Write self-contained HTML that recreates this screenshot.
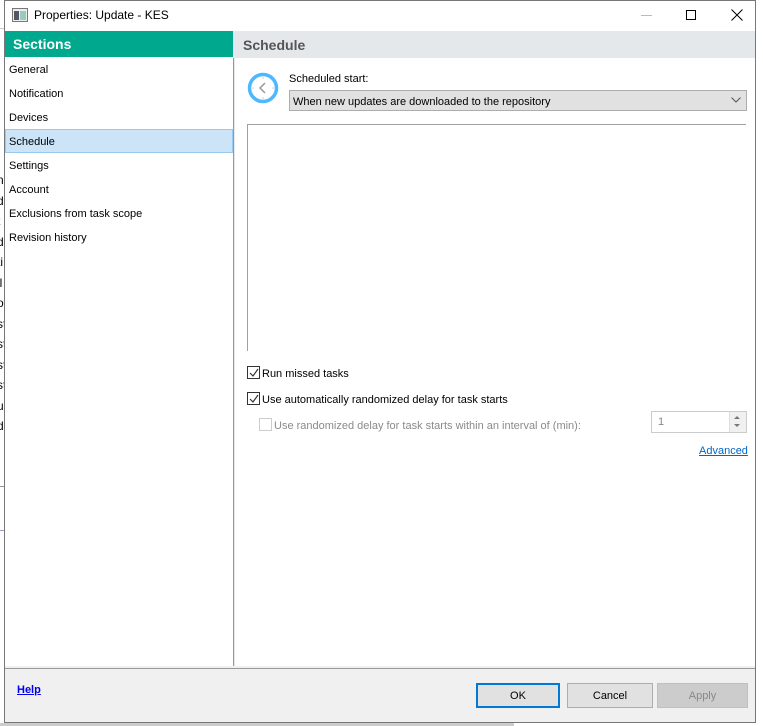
<!DOCTYPE html>
<html><head><meta charset="utf-8"><style>
*{margin:0;padding:0;box-sizing:border-box}
body{width:763px;height:726px;position:relative;overflow:hidden;background:#fff;font-family:"Liberation Sans",sans-serif;font-size:11px;color:#000}
.a{position:absolute}
.strip{left:0;width:4px;overflow:hidden;font-size:12px;line-height:20px;white-space:nowrap}
.nav div{position:absolute;left:9px;font-size:11px}
.btn{position:absolute;top:683px;height:25px;border:1px solid #adadad;background:#e1e1e1;text-align:center;line-height:25px;font-size:11px}
.cb{position:absolute;width:13px;height:13px;border:1px solid #333;background:#fff}
</style></head><body>
<div class="a" style="left:0;top:0;width:4px;height:726px;background:#fff"></div>
<div class="a" style="left:0;top:28px;width:4px;height:1px;background:#ccc"></div>
<div class="a strip" style="top:170px;left:-3px;width:7px;color:#000;line-height:20.5px">n<br>d<br>t<br>d<br>ti<br>il<br>o<br>st<br>st<br>st<br>st<br>u<br>d</div>
<div class="a" style="left:0;top:486px;width:4px;height:1px;background:#999"></div>
<div class="a" style="left:0;top:530px;width:4px;height:1px;background:#99c"></div>
<div class="a" style="left:0;top:723px;width:514px;height:3px;background:#ccc"></div>
<div class="a" style="left:4px;top:0;width:752px;height:723px;border:1px solid #777;background:#fff"></div>
<svg class="a" style="left:12px;top:8px" width="16" height="14"><rect x="0.5" y="0.5" width="15" height="13" fill="#eee" stroke="#777"/><rect x="2" y="3" width="5" height="9" fill="#556"/><rect x="8" y="3" width="6" height="9" fill="#9cb"/></svg>
<div class="a" style="left:34px;top:8px;font-size:12px">Properties: Update - KES</div>
<div class="a" style="left:641px;top:15px;width:11px;height:1px;background:#bbb"></div>
<div class="a" style="left:686px;top:10px;width:10px;height:10px;border:1px solid #000"></div>
<svg class="a" style="left:731px;top:9px" width="12" height="12"><path d="M0.5 0.5L11.5 11.5M11.5 0.5L0.5 11.5" stroke="#000"/></svg>
<div class="a" style="left:5px;top:31px;width:228px;height:26px;background:#00a88e;color:#fff;font-weight:bold;font-size:14px;padding:5px 0 0 8px">Sections</div>
<div class="a" style="left:235px;top:31px;width:520px;height:27px;background:#e5e8eb;color:#555;font-weight:bold;font-size:14px;padding:6px 0 0 8px">Schedule</div>
<div class="a" style="left:233px;top:31px;width:2px;height:636px;background:#e5e8eb"></div>
<div class="a" style="left:233px;top:58px;width:1px;height:609px;background:#999"></div>
<div class="a" style="left:5px;top:129px;width:228px;height:24px;background:#cce4f7;border:1px solid #99c9ef"></div>
<div class="nav">
<div style="top:64px">General</div><div style="top:88px">Notification</div><div style="top:112px">Devices</div><div style="top:136px">Schedule</div><div style="top:160px">Settings</div><div style="top:184px">Account</div><div style="top:208px">Exclusions from task scope</div><div style="top:232px">Revision history</div>
</div>
<svg class="a" style="left:247px;top:72px" width="32" height="32"><circle cx="16" cy="16" r="13.5" fill="#fff" stroke="#4db8ff" stroke-width="3.5"/><path d="M18 11L13 16L18 21" fill="none" stroke="#999" stroke-width="1.5"/><g fill="#ccc"><circle cx="16" cy="6" r="0.8"/><circle cx="16" cy="26" r="0.8"/><circle cx="6" cy="16" r="0.8"/><circle cx="26" cy="16" r="0.8"/></g></svg>
<div class="a" style="left:289px;top:73px">Scheduled start:</div>
<div class="a" style="left:289px;top:90px;width:458px;height:21px;background:#e1e1e1;border:1px solid #adadad;padding:5px 0 0 3px">When new updates are downloaded to the repository</div>
<svg class="a" style="left:731px;top:97px" width="10" height="6"><path d="M0.5 0.5L5 5L9.5 0.5" fill="none" stroke="#555"/></svg>
<div class="a" style="left:247px;top:124px;width:499px;height:1px;background:#a0a0a0"></div>
<div class="a" style="left:247px;top:124px;width:1px;height:227px;background:#a0a0a0"></div>
<div class="cb" style="left:247px;top:366px"></div>
<svg class="a" style="left:249px;top:368px" width="10" height="10"><path d="M1 5L4 8L9 1" fill="none" stroke="#333" stroke-width="1.2"/></svg>
<div class="a" style="left:262px;top:368px">Run missed tasks</div>
<div class="cb" style="left:247px;top:392px"></div>
<svg class="a" style="left:249px;top:394px" width="10" height="10"><path d="M1 5L4 8L9 1" fill="none" stroke="#333" stroke-width="1.2"/></svg>
<div class="a" style="left:262px;top:394px">Use automatically randomized delay for task starts</div>
<div class="cb" style="left:259px;top:418px;border-color:#ccc"></div>
<div class="a" style="left:274px;top:420px;color:#8a8a8a">Use randomized delay for task starts within an interval of (min):</div>
<div class="a" style="left:651px;top:411px;width:96px;height:22px;border:1px solid #ccc;color:#888;padding:4px 0 0 6px">1</div>
<div class="a" style="left:729px;top:412px;width:17px;height:20px;background:#f0f0f0;border-left:1px solid #ddd"></div>
<svg class="a" style="left:733px;top:415px" width="8" height="14"><path d="M1 4L4 1L7 4Z M1 9L4 12L7 9Z" fill="#777"/></svg>
<div class="a" style="left:699px;top:445px;color:#0066cc;text-decoration:underline">Advanced</div>
<div class="a" style="left:5px;top:666px;width:750px;height:2px;background:#f0f0f0"></div>
<div class="a" style="left:5px;top:668px;width:750px;height:1px;background:#999"></div>
<div class="a" style="left:5px;top:669px;width:750px;height:53px;background:#f0f0f0"></div>
<div class="a" style="left:17px;top:684px;color:#0000ee;font-weight:bold;text-decoration:underline">Help</div>
<div class="btn" style="left:476px;width:84px;border:2px solid #0078d7;line-height:23px">OK</div>
<div class="btn" style="left:567px;width:86px">Cancel</div>
<div class="btn" style="left:657px;width:91px;background:#ccc;border-color:#bfbfbf;color:#888">Apply</div>
</body></html>
